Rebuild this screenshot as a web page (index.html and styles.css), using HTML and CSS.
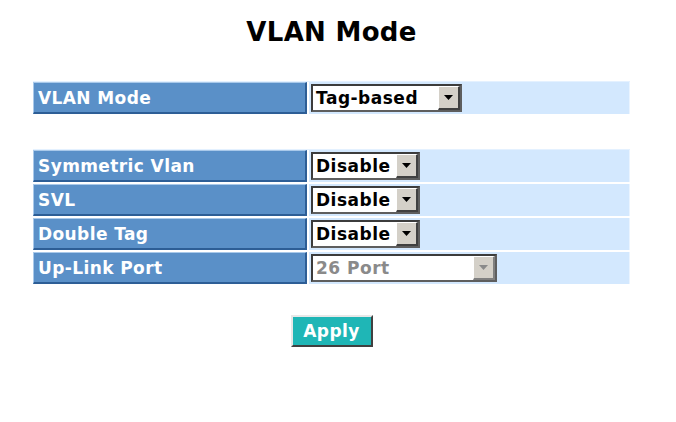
FILE: index.html
```html
<!DOCTYPE html>
<html>
<head>
<meta charset="utf-8">
<link rel="stylesheet" href="styles.css">
</head>
<body>
<div class="page">
  <h1 class="title">VLAN Mode</h1>
  <div class="panel">
    <div class="row">
      <div class="label">VLAN Mode</div>
      <div class="value">
        <div class="select w-tag">
          <span class="sel-text">Tag-based</span>
          <span class="arrow"><svg width="9" height="5" viewBox="0 0 9 5"><path d="M0 0H9L4.5 5Z" fill="#000"/></svg></span>
        </div>
      </div>
    </div>
  </div>
  <div class="panel second">
    <div class="row">
      <div class="label">Symmetric Vlan</div>
      <div class="value">
        <div class="select w-dis">
          <span class="sel-text">Disable</span>
          <span class="arrow"><svg width="9" height="5" viewBox="0 0 9 5"><path d="M0 0H9L4.5 5Z" fill="#000"/></svg></span>
        </div>
      </div>
    </div>
    <div class="row">
      <div class="label">SVL</div>
      <div class="value">
        <div class="select w-dis">
          <span class="sel-text">Disable</span>
          <span class="arrow"><svg width="9" height="5" viewBox="0 0 9 5"><path d="M0 0H9L4.5 5Z" fill="#000"/></svg></span>
        </div>
      </div>
    </div>
    <div class="row">
      <div class="label">Double Tag</div>
      <div class="value">
        <div class="select w-dis">
          <span class="sel-text">Disable</span>
          <span class="arrow"><svg width="9" height="5" viewBox="0 0 9 5"><path d="M0 0H9L4.5 5Z" fill="#000"/></svg></span>
        </div>
      </div>
    </div>
    <div class="row">
      <div class="label">Up-Link Port</div>
      <div class="value">
        <div class="select w-port disabled">
          <span class="sel-text">26 Port</span>
          <span class="arrow"><svg width="9" height="5" viewBox="0 0 9 5"><path d="M0 0H9L4.5 5Z" fill="#8a8a8a"/></svg></span>
        </div>
      </div>
    </div>
  </div>
  <div class="actions">
    <button class="apply">Apply</button>
  </div>
</div>
</body>
</html>
```

FILE: styles.css
```css
html, body {
  margin: 0;
  padding: 0;
  background: #ffffff;
}

body {
  font-family: "DejaVu Sans", Verdana, sans-serif;
}

.page {
  width: 597px;
  margin-left: 33px;
  padding-top: 17px;
}

.title {
  margin: 0;
  text-align: center;
  font-size: 26px;
  line-height: 30px;
  font-weight: bold;
  letter-spacing: 0.3px;
  color: #000;
}

.panel {
  margin-top: 34px;
  border-top: 1px solid #e4f1ff;
}

.panel.second {
  margin-top: 35px;
}

.row {
  display: flex;
  height: 32px;
  margin-bottom: 2px;
}

.label {
  width: 274px;
  box-sizing: border-box;
  background: #5a90c8;
  border-top: 1px solid #a9c9ea;
  border-left: 1px solid #a9c9ea;
  border-right: 2px solid #2d5e96;
  border-bottom: 2px solid #2d5e96;
  color: #ffffff;
  font-size: 17px;
  font-weight: bold;
  letter-spacing: 0.4px;
  padding-left: 4px;
  display: flex;
  align-items: center;
  white-space: nowrap;
}

.value {
  flex: 1;
  margin-left: 2px;
  background: #d3e8fe;
  border-right: 1px solid #eaf4ff;
  display: flex;
  align-items: center;
  padding-left: 2px;
}

.select {
  height: 28px;
  box-sizing: border-box;
  display: flex;
  align-items: stretch;
  background: #ffffff;
  border-top: 2px solid #3c3c3c;
  border-left: 2px solid #3c3c3c;
  border-right: 2px solid #5e5e5e;
  border-bottom: 2px solid #5e5e5e;
}

.w-tag { width: 151px; }
.w-dis { width: 109px; }
.w-port { width: 186px; }

.sel-text {
  flex: 1;
  font-size: 17px;
  font-weight: bold;
  letter-spacing: 0.5px;
  color: #000;
  padding-left: 3px;
  line-height: 24px;
  white-space: nowrap;
  overflow: hidden;
}

.disabled .sel-text {
  color: #8a8a8a;
}

.arrow {
  width: 22px;
  box-sizing: border-box;
  background: #d4d0c8;
  border-top: 1px solid #ffffff;
  border-left: 1px solid #ffffff;
  border-right: 2px solid #404040;
  border-bottom: 2px solid #404040;
  display: flex;
  align-items: center;
  justify-content: center;
}

.disabled .arrow {
  border-right-color: #808080;
  border-bottom-color: #808080;
}

.actions {
  display: flex;
  justify-content: center;
  margin-top: 31px;
}

.apply {
  width: 82px;
  height: 32px;
  box-sizing: border-box;
  background: #1fb6b6;
  color: #ffffff;
  font-family: "DejaVu Sans", Verdana, sans-serif;
  font-size: 17px;
  font-weight: bold;
  letter-spacing: 0.4px;
  border-top: 2px solid #e8e8e8;
  border-left: 2px solid #e8e8e8;
  border-right: 2px solid #404040;
  border-bottom: 2px solid #404040;
  padding: 0;
  cursor: pointer;
}
```
